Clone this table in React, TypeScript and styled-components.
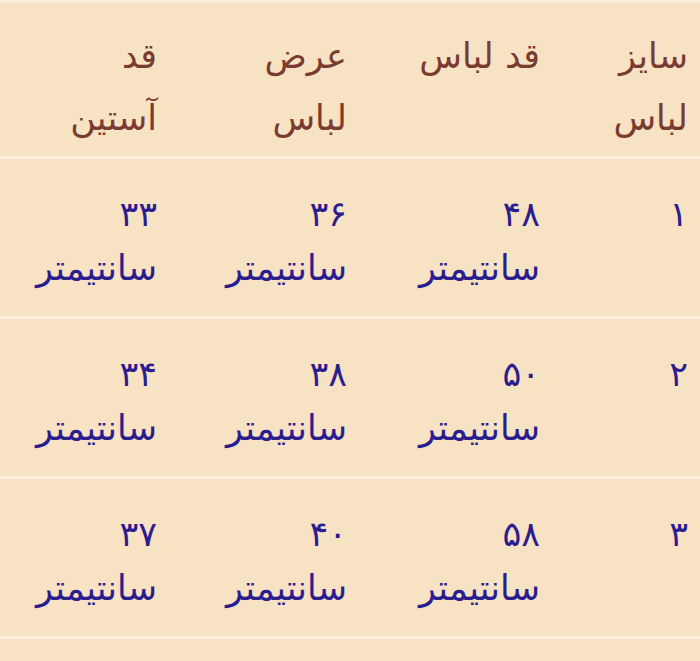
import styled, { createGlobalStyle } from "styled-components";

const GlobalStyle = createGlobalStyle`
  html, body {
    margin: 0;
    padding: 0;
    background: #f8e2c4;
  }
  body {
    font-family: "DejaVu Sans", "Noto Sans", sans-serif;
  }
`;

const headers = [["سایز", "لباس"], ["قد لباس"], ["عرض", "لباس"], ["قد", "آستین"]];

const rows = [
  { size: "۱", length: "۴۸", width: "۳۶", sleeve: "۳۳" },
  { size: "۲", length: "۵۰", width: "۳۸", sleeve: "۳۴" },
  { size: "۳", length: "۵۸", width: "۴۰", sleeve: "۳۷" },
];

const UNIT = "سانتیمتر";

function App() {
  return (
    <>
      <GlobalStyle />
      <Table dir="rtl">
        <Row $head>
          {headers.map((lines, i) => (
            <Cell key={i} $head>
              {lines.map((l) => (
                <div key={l}>{l}</div>
              ))}
            </Cell>
          ))}
        </Row>
        {rows.map((r) => (
          <Row key={r.size}>
            <Cell>
              <div>{r.size}</div>
            </Cell>
            {[r.length, r.width, r.sleeve].map((v, i) => (
              <Cell key={i}>
                <div>{v}</div>
                <div>{UNIT}</div>
              </Cell>
            ))}
          </Row>
        ))}
      </Table>
    </>
  );
}

export default App;

const Table = styled.div`
  width: 700px;
  height: 661px;
  background: #f8e2c4;
  border-top: 3px solid #fbecd9;
  box-sizing: border-box;
  overflow: hidden;
`;

const Row = styled.div<{ $head?: boolean }>`
  display: grid;
  grid-template-columns: 148px 193px 190px 1fr;
  align-items: start;
  height: ${(p) => (p.$head ? "156px" : "160px")};
  padding-right: 12px;
  padding-top: ${(p) => (p.$head ? "22px" : "28px")};
  box-sizing: border-box;
  border-bottom: 3px solid #fcefdf;
`;

const Cell = styled.div<{ $head?: boolean }>`
  text-align: right;
  font-size: 35px;
  line-height: ${(p) => (p.$head ? "62px" : "54px")};
  color: ${(p) => (p.$head ? "#7a3b30" : "#2a1e8e")};
`;
